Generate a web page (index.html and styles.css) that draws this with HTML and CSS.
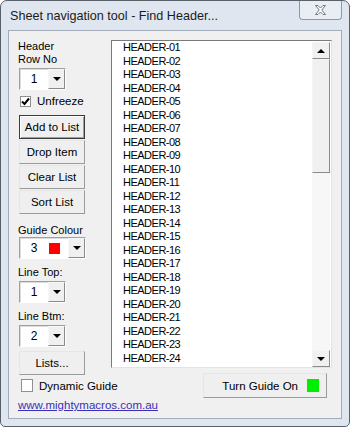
FILE: index.html
```html
<!DOCTYPE html>
<html lang="en">
<head>
    <meta charset="UTF-8">
    <title>Sheet navigation tool - Find Header...</title>
    <link rel="stylesheet" href="styles.css">
</head>
<body>
    <div class="window">
        <div class="titlebar">
            <span class="title">Sheet navigation tool - Find Header...</span>
            <div class="close">
                <svg width="13" height="12" viewBox="0 0 13 12">
                    <path d="M1.5 1.5 L4 1.5 L6.5 4 L9 1.5 L11.5 1.5 L7.8 6 L11.5 10.5 L9 10.5 L6.5 8 L4 10.5 L1.5 10.5 L5.2 6 Z" fill="#fff" stroke="#6d7785" stroke-width="1"/>
                </svg>
            </div>
        </div>

        <div class="client">
            <div class="main">
                <div class="left">
                    <div class="lbl">Header<br>Row No</div>
                    <div class="combo small">
                        <span class="val">1</span>
                        <span class="drop"><i class="tri"></i></span>
                    </div>
                    <label class="check unfreeze">
                        <span class="box">
                            <svg width="9" height="9" viewBox="0 0 9 9"><path d="M1 4.5 L3.5 7 L8 1.5" fill="none" stroke="#000" stroke-width="2"/></svg>
                        </span>
                        Unfreeze
                    </label>
                    <div class="btn default first">Add to List</div>
                    <div class="btn">Drop Item</div>
                    <div class="btn">Clear List</div>
                    <div class="btn">Sort List</div>

                    <div class="lbl gap10">Guide Colour</div>
                    <div class="combo wide">
                        <span class="val">3</span>
                        <span class="swatch red"></span>
                        <span class="drop"><i class="tri"></i></span>
                    </div>

                    <div class="lbl gap7">Line Top:</div>
                    <div class="combo small">
                        <span class="val">1</span>
                        <span class="drop"><i class="tri"></i></span>
                    </div>

                    <div class="lbl gap7">Line Btm:</div>
                    <div class="combo small">
                        <span class="val">2</span>
                        <span class="drop"><i class="tri"></i></span>
                    </div>

                    <div class="btn lists">Lists...</div>
                </div>

                <div class="listbox">
                    <div class="items">
                        <div>HEADER-01</div>
                        <div>HEADER-02</div>
                        <div>HEADER-03</div>
                        <div>HEADER-04</div>
                        <div>HEADER-05</div>
                        <div>HEADER-06</div>
                        <div>HEADER-07</div>
                        <div>HEADER-08</div>
                        <div>HEADER-09</div>
                        <div>HEADER-10</div>
                        <div>HEADER-11</div>
                        <div>HEADER-12</div>
                        <div>HEADER-13</div>
                        <div>HEADER-14</div>
                        <div>HEADER-15</div>
                        <div>HEADER-16</div>
                        <div>HEADER-17</div>
                        <div>HEADER-18</div>
                        <div>HEADER-19</div>
                        <div>HEADER-20</div>
                        <div>HEADER-21</div>
                        <div>HEADER-22</div>
                        <div>HEADER-23</div>
                        <div>HEADER-24</div>
                    </div>
                    <div class="scrollbar">
                        <div class="sb-btn"><i class="tri up"></i></div>
                        <div class="thumb"></div>
                        <div class="track"></div>
                        <div class="sb-btn"><i class="tri"></i></div>
                    </div>
                </div>
            </div>

            <div class="bottom">
                <label class="check dynamic">
                    <span class="box"></span>
                    Dynamic Guide
                </label>
                <div class="btn guide">Turn Guide On <span class="swatch green"></span></div>
            </div>
            <a class="link" href="#">www.mightymacros.com.au</a>
        </div>
    </div>
</body>
</html>
```

FILE: styles.css
```css
body {
    margin: 0;
    font-family: "Liberation Sans", Arial, sans-serif;
    font-size: 11px;
    color: #000;
    background: #fff;
}
.window {
    width: 350px;
    height: 427px;
    box-sizing: border-box;
    border: 1px solid #59616b;
    border-radius: 7px 7px 5px 5px;
    background: #dfe6ef;
    overflow: hidden;
}
.titlebar {
    height: 29px;
    display: flex;
    justify-content: space-between;
    align-items: flex-start;
}
.title {
    font-size: 12.6px;
    color: #1b1b1b;
    padding: 8px 0 0 9px;
}
.close {
    width: 41px;
    height: 18px;
    margin-right: 7px;
    border: 1px solid #8f99a6;
    border-top: none;
    border-radius: 0 0 4px 4px;
    background: #e9eef4;
    display: flex;
    align-items: center;
    justify-content: center;
}
.client {
    height: 389px;
    margin: 0 7px;
    box-sizing: border-box;
    border: 1px solid #a3adb9;
    background: #f0f0f0;
    padding: 9px 8px 0 10px;
}
.main {
    display: flex;
    align-items: flex-start;
}
.left {
    width: 92px;
    flex: none;
}
.lbl {
    line-height: 13px;
    margin-left: -1px;
}
.gap10 {
    margin-top: 10px;
}
.gap7 {
    margin-top: 7px;
}
.combo {
    height: 22px;
    box-sizing: border-box;
    display: flex;
    border: 1px solid;
    border-color: #a0a0a0 #fff #fff #a0a0a0;
    background: #fff;
    box-shadow: inset 1px 1px 0 #dcdcdc;
}
.combo.small {
    width: 47px;
    margin-top: 2px;
}
.combo.wide {
    width: 67px;
}
.val {
    width: 29px;
    text-align: center;
    line-height: 20px;
    font-size: 12px;
}
.wide .val {
    width: 28px;
}
.drop {
    width: 17px;
    margin-left: auto;
    box-sizing: border-box;
    border: 1px solid;
    border-color: #f7f7f7 #8a8a8a #8a8a8a #f7f7f7;
    background: #f0f0f0;
    display: flex;
    align-items: center;
    justify-content: center;
}
.tri {
    width: 0;
    height: 0;
    border-left: 4px solid transparent;
    border-right: 4px solid transparent;
    border-top: 4px solid #000;
}
.tri.up {
    border-top: none;
    border-bottom: 4px solid #000;
}
.swatch {
    display: inline-block;
    width: 11px;
    height: 11px;
}
.swatch.red {
    background: #f00;
    align-self: center;
    margin-left: 1px;
}
.swatch.green {
    background: #00ee00;
    width: 12px;
    height: 13px;
    margin-left: 9px;
}
.check {
    display: flex;
    align-items: center;
    gap: 6px;
}
.box {
    width: 11px;
    height: 11px;
    box-sizing: border-box;
    border: 1px solid #8e8f8f;
    background: #fff;
    display: flex;
    align-items: center;
    justify-content: center;
}
.unfreeze {
    margin-top: 4px;
    height: 14px;
    margin-left: 1px;
    font-size: 11.5px;
}
.btn {
    width: 66px;
    height: 24px;
    box-sizing: border-box;
    margin-top: 1px;
    border: 1px solid;
    border-color: #e6e6e6 #9a9a9a #9a9a9a #e6e6e6;
    background: #efefef;
    display: flex;
    align-items: center;
    justify-content: center;
    font-size: 11.5px;
}
.btn.first {
    margin-top: 7px;
}
.btn.default {
    border-color: #3a3a3a;
    box-shadow: inset 1px 1px 0 #fff, inset -1px -1px 0 #a0a0a0;
}
.btn.lists {
    margin-top: 4px;
}
.listbox {
    width: 221px;
    height: 328px;
    box-sizing: border-box;
    border: 1px solid;
    border-color: #7a7a7a #e3e3e3 #e3e3e3 #7a7a7a;
    background: #fff;
    display: flex;
}
.items {
    flex: 1;
    padding: 0 0 0 11px;
    font-size: 11px;
    letter-spacing: -0.5px;
    line-height: 13.5px;
    overflow: hidden;
}
.scrollbar {
    width: 18px;
    margin: 1px 1px 0 0;
    display: flex;
    flex-direction: column;
}
.sb-btn {
    height: 17px;
    box-sizing: border-box;
    border: 1px solid;
    border-color: #f5f5f5 #8a8a8a #8a8a8a #f5f5f5;
    background: #f0f0f0;
    display: flex;
    align-items: center;
    justify-content: center;
}
.thumb {
    height: 114px;
    box-sizing: border-box;
    border: 1px solid;
    border-color: #f5f5f5 #8a8a8a #8a8a8a #f5f5f5;
    background: #f0f0f0;
}
.track {
    flex: 1;
    background: #f7f7f7;
}
.bottom {
    margin-top: -2px;
    display: flex;
    align-items: center;
    justify-content: space-between;
    padding-right: 6px;
}
.dynamic {
    margin-left: 2px;
    font-size: 11.5px;
    gap: 6px;
}
.dynamic .box {
    width: 12px;
    height: 13px;
}
.btn.guide {
    width: 124px;
    height: 25px;
    margin-top: 0;
    justify-content: flex-end;
    padding-right: 7px;
}
.link {
    display: block;
    margin: 1px 0 0 -1px;
    line-height: 13px;
    font-size: 11.5px;
    color: #3b2fb8;
    text-decoration: underline;
}
```
